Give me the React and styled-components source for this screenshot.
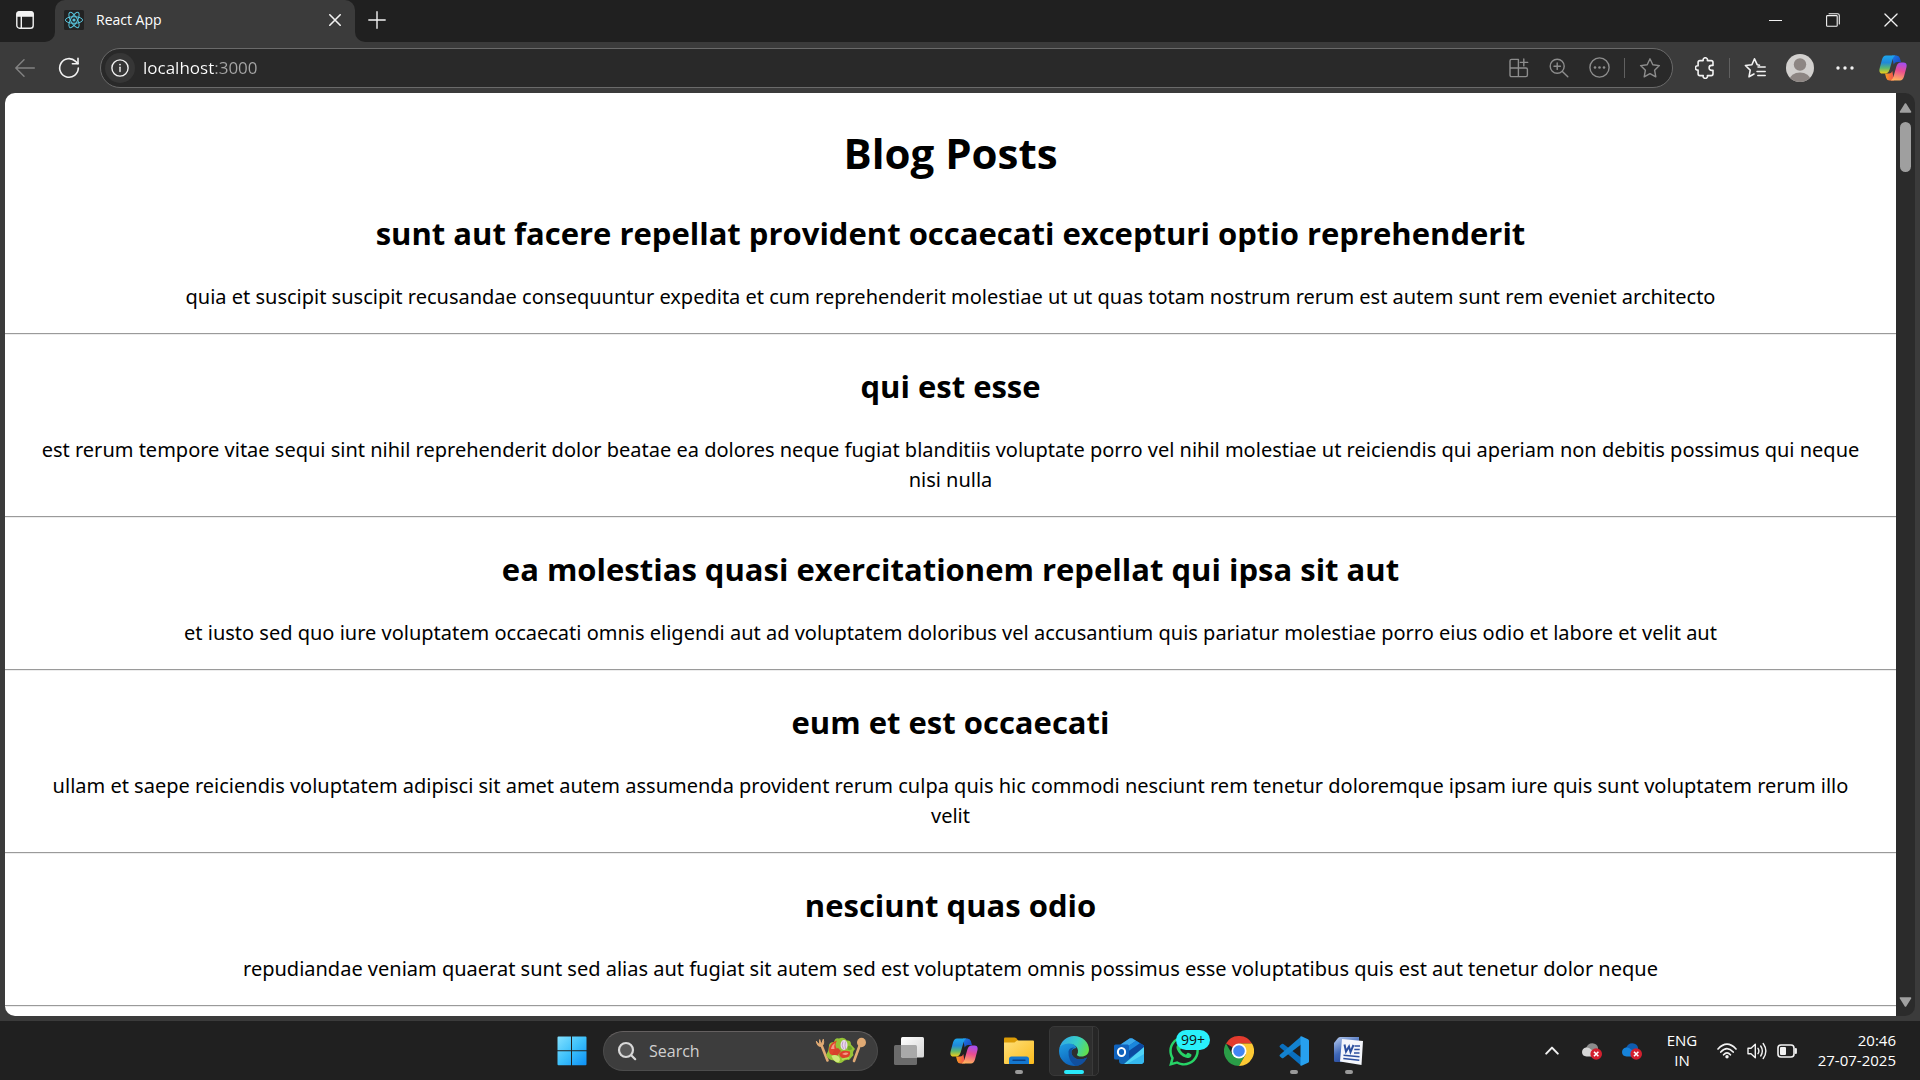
import React from "react";
import styled, { createGlobalStyle, css } from "styled-components";
import { FaWhatsapp } from "react-icons/fa";

const Global = createGlobalStyle`
  *, *::before, *::after { box-sizing: border-box; }
  html, body { margin: 0; height: 100%; }
  body { background: #202020; overflow: hidden; font-family: "Open Sans", "Noto Sans", sans-serif; }
  button, input { font-family: inherit; }
`;

const Desktop = styled.div`
  display: flex;
  flex-direction: column;
  height: 100vh;
`;

const Browser = styled.div`
  display: flex;
  flex-direction: column;
  flex: 1;
  min-height: 0;
  background: #3b3b3b;
`;

const TitleBar = styled.header`
  display: flex;
  height: 42px;
`;

const TitleStart = styled.div`
  display: flex;
  width: 55px;
  padding-left: 5px;
  background: #202020;
  border-bottom-right-radius: 10px;
`;

const TitleEnd = styled.div`
  display: flex;
  flex: 1;
  justify-content: space-between;
  background: #202020;
  border-bottom-left-radius: 10px;
`;

const WindowControls = styled.div`
  display: flex;
`;

const IconButton = styled.button`
  display: flex;
  align-items: center;
  justify-content: center;
  flex: none;
  width: ${(p) => p.$w || 44}px;
  height: 40px;
  padding: 0;
  border: 0;
  background: none;
  color: ${(p) => p.$color || "#f2f2f2"};
  svg { display: block; }
`;

const TabHolder = styled.div`
  width: 300px;
  background: #202020;
`;

const Tab = styled.div`
  display: flex;
  align-items: center;
  height: 42px;
  padding: 0 0 2px 9px;
  border-radius: 10px 10px 0 0;
  background: #3b3b3b;
`;

const TabTitle = styled.span`
  flex: 1;
  margin-left: 12px;
  color: #fff;
  font-size: 14px;
  line-height: 20px;
`;

const Toolbar = styled.div`
  display: flex;
  align-items: center;
  height: 51px;
  padding: 0 1px 0 3px;
`;

const AddressBar = styled.div`
  display: flex;
  align-items: center;
  flex: 1;
  height: 40px;
  margin: 0 10px 0 9px;
  padding: 0 2px 0 4px;
  border: 1px solid #6a6a6a;
  border-radius: 20px;
  background: #292929;
`;

const SiteInfo = styled(IconButton)`
  width: 30px;
  height: 30px;
  border-radius: 15px;
  background: #363636;
`;

const AddressInput = styled.input`
  flex: 1;
  min-width: 0;
  height: 30px;
  margin-left: 8px;
  padding: 0;
  border: 0;
  outline: 0;
  font-size: 17px;
  color: transparent;
  background: linear-gradient(to right, #fff 72px, #a6a6a6 72px);
  background-clip: text;
  -webkit-background-clip: text;
`;

const Divider = styled.span`
  width: 1px;
  height: 20px;
  margin: 0 ${(p) => p.$gap}px;
  background: #606060;
`;

const Viewport = styled.div`
  display: flex;
  flex: 1;
  min-height: 0;
  margin: 0 5px 5px;
  border-radius: 10px;
  overflow: hidden;
`;

const Page = styled.main`
  flex: 1;
  overflow: hidden;
  background: #fff;
  color: #000;
  text-align: center;
`;

const PageTitle = styled.h1`
  margin: 30px 0;
  font-size: 42px;
  line-height: 59px;
  font-weight: 700;
`;

const Post = styled.article`
  border-bottom: 1px solid #9a9a9a;
  box-shadow: 0 1px #ededed;
  padding-bottom: 21px;
  margin-bottom: 31px;
`;

const PostTitle = styled.h2`
  margin: 0 0 27px;
  font-size: 31px;
  line-height: 43px;
  font-weight: 700;
`;

const PostBody = styled.p`
  margin: 0;
  padding: 0 32px;
  font-family: "Noto Sans", "Open Sans", sans-serif;
  font-size: 20px;
  line-height: 30px;
`;

const ScrollTrack = styled.div`
  display: flex;
  flex-direction: column;
  align-items: center;
  width: 19px;
  padding: 10px 0 9px;
  background: #2b2b2b;
`;

const ScrollArrow = styled.button`
  width: 13px;
  height: 10px;
  padding: 0;
  border: 0;
  background: none;
  svg { display: block; }
`;

const ScrollThumb = styled.div`
  width: 11px;
  height: 50px;
  margin: 9px 0 auto;
  border-radius: 6px;
  background: #9f9f9f;
`;

const Taskbar = styled.footer`
  display: grid;
  grid-template-columns: 1fr auto 1fr;
  align-items: center;
  height: 59px;
  background: #202020;
`;

const Pinned = styled.nav`
  display: flex;
  grid-column: 2;
  height: 58px;
`;

const TaskButton = styled.button`
  position: relative;
  display: flex;
  align-items: center;
  justify-content: center;
  width: 55px;
  height: 58px;
  padding: 0;
  border: 0;
  background: none;
  svg { display: block; }
  &::after {
    content: "";
    position: absolute;
    left: 50%;
    bottom: 6px;
    height: 4px;
    border-radius: 2px;
    transform: translateX(-50%);
    ${(p) => p.$state === "open" && css`width: 8px; background: #9a9a9a;`}
    ${(p) => p.$state === "active" && css`width: 20px; background: #29e8fa;`}
  }
`;

const ActiveStack = styled.span`
  display: flex;
  align-items: center;
  width: 50px;
  height: 50px;
  padding-left: 9px;
  border: 1px solid #383838;
  border-radius: 5px;
  background: linear-gradient(to right, #2e2e2e 42px, #3a3a3a 42px, #3a3a3a 43px, #262626 43px);
`;

const Badge = styled.span`
  position: absolute;
  top: 8px;
  left: 20px;
  width: 34px;
  height: 20px;
  border-radius: 10px;
  background: #29f0fb;
  color: #111;
  font-size: 14px;
  line-height: 20px;
`;

const SearchBox = styled.label`
  display: flex;
  align-items: center;
  align-self: center;
  width: 275px;
  height: 40px;
  margin: 0 3px 0 4px;
  padding: 0 10px 0 13px;
  border: 1px solid #4c4c4c;
  border-top-color: #646060;
  border-radius: 20px;
  background: #3d3d3d;
`;

const SearchInput = styled.input`
  flex: 1;
  min-width: 0;
  margin-left: 12px;
  padding: 0;
  border: 0;
  outline: 0;
  background: none;
  font-size: 16px;
  color: #fff;
  &::placeholder { color: #d0d0d0; opacity: 1; }
`;

const Tray = styled.div`
  display: flex;
  align-items: center;
  justify-content: flex-end;
  padding-right: 24px;
  color: #fff;
`;

const TrayText = styled.button`
  width: ${(p) => p.$w}px;
  padding: 0 0 2px;
  border: 0;
  background: none;
  color: #fff;
  font-size: 15px;
  line-height: 20px;
  text-align: ${(p) => p.$align || "center"};
  white-space: nowrap;
  span { display: block; }
`;

const stroke = { fill: "none", stroke: "currentColor", strokeWidth: 1.4, strokeLinecap: "round", strokeLinejoin: "round" };

const TabActionsIcon = () => (
  <svg width="18" height="18" viewBox="0 0 18 18" {...stroke}>
    <rect x="0.8" y="0.8" width="16.4" height="16.4" rx="2.8" />
    <path d="M1 2.5Q1 1 2.8 1h12.4Q17 1 17 2.5V5H1z" fill="currentColor" />
    <path d="M5.3 5v12" />
  </svg>
);

const ReactIcon = () => (
  <svg width="20" height="20" viewBox="0 0 20 20">
    <rect width="20" height="20" rx="1.5" fill="#222" />
    <g fill="none" stroke="#58c4dc" strokeWidth="1">
      <ellipse cx="10" cy="10" rx="8.6" ry="3.3" />
      <ellipse cx="10" cy="10" rx="8.6" ry="3.3" transform="rotate(60 10 10)" />
      <ellipse cx="10" cy="10" rx="8.6" ry="3.3" transform="rotate(120 10 10)" />
    </g>
    <circle cx="10" cy="10" r="1.6" fill="#58c4dc" />
  </svg>
);

const CrossIcon = ({ size = 11, w = 1.6 }) => (
  <svg width={size} height={size} viewBox="0 0 12 12" {...stroke} strokeWidth={w}>
    <path d="M0.8 0.8l10.4 10.4M11.2 0.8L0.8 11.2" />
  </svg>
);

const PlusIcon = () => (
  <svg width="18" height="18" viewBox="0 0 18 18" {...stroke}>
    <path d="M9 0.8v16.4M0.8 9h16.4" />
  </svg>
);

const MinimizeIcon = () => (
  <svg width="13" height="13" viewBox="0 0 13 13" fill="currentColor"><path d="M0 6h13v1H0z" /></svg>
);

const RestoreIcon = () => (
  <svg width="14" height="14" viewBox="0 0 14 14" {...stroke} strokeWidth="1.1">
    <rect x="0.6" y="2.6" width="10.6" height="10.6" rx="0.8" />
    <path d="M3 0.8h8.6q1.7 0 1.7 1.7V11" />
  </svg>
);

const BackIcon = () => (
  <svg width="20" height="18" viewBox="0 0 20 18" {...stroke}>
    <path d="M19.3 9H1M9 0.8L0.8 9L9 17.2" />
  </svg>
);

const RefreshIcon = () => (
  <svg width="22" height="22" viewBox="0 0 22 22" {...stroke} strokeWidth="1.6">
    <path d="M20.3 11A9.3 9.3 0 1 1 17.6 4.4L20 6.6" />
    <path d="M20 1.2v5.6h-5.6" />
  </svg>
);

const InfoIcon = () => (
  <svg width="18" height="18" viewBox="0 0 18 18" {...stroke}>
    <circle cx="9" cy="9" r="8.1" />
    <path d="M9 8.2v4.4" />
    <circle cx="9" cy="5.6" r="0.9" fill="currentColor" stroke="none" />
  </svg>
);

const AppsIcon = () => (
  <svg width="20" height="20" viewBox="0 0 20 20" {...stroke}>
    <path d="M1 10V3q0-1.6 1.6-1.6H9.4V18.6M1 10h16q1.4 0 1.4 1.4v5.6q0 1.6-1.6 1.6H2.6Q1 18.6 1 17z" />
    <path d="M14.8 0.9v7M11.3 4.4h7.4" />
  </svg>
);

const ZoomIcon = () => (
  <svg width="20" height="20" viewBox="0 0 20 20" {...stroke}>
    <circle cx="8.2" cy="8.2" r="7" />
    <path d="M13.4 13.4l5.4 5.4M8.2 5v6.4M5 8.2h6.4" />
  </svg>
);

const MoreCircleIcon = () => (
  <svg width="21" height="21" viewBox="0 0 21 21" {...stroke}>
    <circle cx="10.5" cy="10.5" r="9.6" />
    <g fill="currentColor" stroke="none">
      <circle cx="6" cy="10.5" r="1.3" /><circle cx="10.5" cy="10.5" r="1.3" /><circle cx="15" cy="10.5" r="1.3" />
    </g>
  </svg>
);

const StarIcon = () => (
  <svg width="22" height="22" viewBox="0 0 22 22" {...stroke}>
    <path d="M11 1.8l2.8 5.9 6.6.9-4.8 4.6 1.2 6.6L11 16.6l-5.8 3.2 1.2-6.6L1.6 8.6l6.6-.9z" />
  </svg>
);

const PuzzleIcon = () => (
  <svg width="20" height="22" viewBox="0 0 20 22" {...stroke} strokeWidth="1.6">
    <path d="M4.900 3.600H8.200a2.200 2.200 0 1 1 4.200 0H16.200a1.800 1.800 0 0 1 1.800 1.800V8.400H16.600a2.500 2.500 0 1 0 0 5H18v3.400a1.800 1.800 0 0 1-1.800 1.800H12.400a2.200 2.200 0 1 1-4.200 0H4.900a1.800 1.800 0 0 1-1.800-1.800V13.100a2.200 2.200 0 1 1 0-4.300V5.400a1.800 1.800 0 0 1 1.800-1.800z" />
  </svg>
);

const FavoritesIcon = () => (
  <svg width="22" height="22" viewBox="0 0 22 22" {...stroke} strokeWidth="1.6">
    <path d="M15.500 8.200L13.200 7.700 10.500 1.800 7.900 7.700 1.400 8.500l4.800 4.600-1.200 6.700 5-2.800" />
    <path d="M14 10H21.200M13 14.400h8.200M13.800 18.600H21.200" strokeWidth="1.500" />
  </svg>
);

const AvatarIcon = () => (
  <svg width="28" height="28" viewBox="0 0 28 28">
    <clipPath id="avatarClip"><circle cx="14" cy="14" r="14" /></clipPath>
    <g clipPath="url(#avatarClip)">
      <rect width="28" height="28" fill="#d2d0ce" />
      <circle cx="14" cy="10.500" r="6.200" fill="#8d8683" />
      <ellipse cx="14" cy="26" rx="10.500" ry="7.500" fill="#8d8683" />
    </g>
  </svg>
);

const DotsIcon = () => (
  <svg width="18" height="4" viewBox="0 0 18 4" fill="currentColor">
    <circle cx="2" cy="2" r="1.700" /><circle cx="9" cy="2" r="1.700" /><circle cx="16" cy="2" r="1.700" />
  </svg>
);

const CopilotIcon = ({ id }) => (
  <svg width="28" height="26" viewBox="0 0 28 26">
    <defs>
      <linearGradient id={id + "a"} x1="0" y1="0" x2="0" y2="1">
        <stop offset="0" stopColor="#1da7ee" /><stop offset=".4" stopColor="#2189d8" />
        <stop offset=".7" stopColor="#5cb870" /><stop offset="1" stopColor="#f2cf16" />
      </linearGradient>
      <linearGradient id={id + "b"} x1=".6" y1="0" x2=".4" y2="1">
        <stop offset="0" stopColor="#a44df0" /><stop offset=".45" stopColor="#ea4d90" /><stop offset="1" stopColor="#ffb35c" />
      </linearGradient>
      <linearGradient id={id + "c"} x1="0" y1="0" x2="1" y2="1">
        <stop offset="0" stopColor="#1a7be8" /><stop offset="1" stopColor="#1d3fb8" />
      </linearGradient>
      <linearGradient id={id + "d"} x1="0" y1="0" x2="1" y2="0">
        <stop offset="0" stopColor="#f9a01e" /><stop offset="1" stopColor="#f04b52" />
      </linearGradient>
    </defs>
    <path d="M13 .5h4.500q2.500 0 3.300 2.500L22 7h-4q-2.500 0-3.300 2.600z" fill={`url(#${id}c)`} />
    <path d="M15 25.500h-4.500q-2.500 0-3.300-2.500L6 18.500h4q2.500 0 3.300-2.600z" fill={`url(#${id}d)`} />
    <path d="M7 .5h9.500q-2 .5-3 4L10.600 14.500Q9.500 18.500 6 18.500H3.500Q-.5 18.500.6 13.500L3 4.500Q4.200 .5 7 .5z" fill={`url(#${id}a)`} />
    <path d="M21 25.500h-9.500q2-.5 3-4L17.400 11.500Q18.500 7.500 22 7.500h2.500Q28.500 7.500 27.400 12.500L25 21.500Q23.800 25.500 21 25.500z" fill={`url(#${id}b)`} />
  </svg>
);

const Triangle = ({ down }) => (
  <svg width="13" height="10" viewBox="0 0 13 10">
    <path d={down ? "M1.500 1h10L6.500 9z" : "M1.500 9h10L6.500 1z"} fill="#a0a0a0" stroke="#a0a0a0" strokeWidth="1.600" strokeLinejoin="round" />
  </svg>
);

const StartIcon = () => (
  <svg width="30" height="30" viewBox="0 0 30 30">
    <defs>
      <linearGradient id="start" gradientUnits="userSpaceOnUse" x1="0" y1="0" x2="30" y2="30">
        <stop offset="0" stopColor="#86e2ff" /><stop offset=".5" stopColor="#3cc0fb" /><stop offset="1" stopColor="#0a8df5" />
      </linearGradient>
    </defs>
    <path d="M1.500 .500H14v13.800H.500V1.500Q.500.500 1.500.500zM15 .500h13.500q1 0 1 1v12.800H15zM.500 15.300H14v14H1.500q-1 0-1-1zM15 15.300h14.500v13q0 1-1 1H15z" fill="url(#start)" />
  </svg>
);

const SearchIcon = () => (
  <svg width="20" height="20" viewBox="0 0 20 20" fill="#575757" stroke="#d8d8d8" strokeWidth="2.200" strokeLinecap="round">
    <circle cx="9" cy="9" r="7" /><path d="M14.200 14.200l4 4" />
  </svg>
);

const SaladIcon = () => (
  <svg width="52" height="27" viewBox="0 0 52 27">
    <g stroke="#e0aa74" strokeLinecap="round" fill="#e0aa74">
      <path d="M6.800 9L12.500 23.500" strokeWidth="2.600" />
      <path d="M1.400 4.500Q2.200 10 6 9.300 9.800 8 8.300 2.200L7 6 5.800 6.400 4.700 2.600 4.400 6.500 3.600 6.800z" strokeWidth="1" />
      <path d="M44.500 9L39 24" strokeWidth="2.600" />
      <ellipse cx="46.500" cy="5.500" rx="4.500" ry="4.700" stroke="none" />
    </g>
    <path d="M14 9Q14 5 19 5Q20 0 24 1.500Q29-.800 32 3.500Q36 3 36 7.500L40 12Q37 15 38.500 18Q36 21 34 23Q30 22 27 25.500Q22 27.500 19 23.500Q13 23 11 18Q14 14 14 9z" fill="#96c437" />
    <path d="M14 13Q14 6 22 3.500Q19 8 22 12Q18 14 18 18Q14 18 14 13z" fill="#e0452e" />
    <path d="M16 12Q16.500 8 20 6.200Q18.500 9.500 19.500 12z" fill="#f59c86" />
    <path d="M24 17Q27 12 35 14.500Q36 20 30 21.500Q25 21 24 17z" fill="#dd3f2c" />
    <path d="M27 17Q30 14.500 33.500 16Q32 19.500 27 17z" fill="#f59c86" />
    <path d="M19 13L23 11 26 14 22 19 17 18z" fill="#d7402c" />
    <ellipse cx="29" cy="8" rx="3.500" ry="5" fill="#eadcec" />
    <path d="M28 4.500Q26 8 28.500 12M30.500 4.500Q29.500 8 30.500 12" stroke="#b78bc0" strokeWidth=".8" fill="none" />
    <path d="M33 9Q36 8 37.500 12Q35 14 32.500 12.500z" fill="#6ea52c" />
    <path d="M16.500 19Q20 17 23.500 19.500Q26 22 24 25Q19 26 16.500 19z" fill="#cfe97c" />
    <path d="M27 22.500Q30 21 34 21" stroke="#bcdc55" strokeWidth="1.600" fill="none" />
  </svg>
);

const TaskViewIcon = () => (
  <svg width="30" height="28" viewBox="0 0 30 28">
    <defs>
      <linearGradient id="tvw" x1="0" y1="0" x2="1" y2="1"><stop offset="0" stopColor="#fff" /><stop offset="1" stopColor="#d5d5d5" /></linearGradient>
    </defs>
    <rect x="0" y="8" width="23" height="20" rx="1.500" fill="#6b6b6b" />
    <rect x="7" y="0" width="23" height="20.500" rx="1.500" fill="url(#tvw)" />
    <path d="M7 8h14.500q1.500 0 1.500 1.500v11H8.500Q7 20.500 7 19z" fill="#a9a9a9" />
  </svg>
);

const FolderIcon = () => (
  <svg width="30" height="28" viewBox="0 0 30 28">
    <defs><linearGradient id="fold" x1="0" y1="0" x2="1" y2="1"><stop offset="0" stopColor="#ffe07a" /><stop offset="1" stopColor="#fbbb1c" /></linearGradient></defs>
    <path d="M0 1.500Q0 .500 1 .500h9.500q1 0 1.700.700l2 2.300V8H0z" fill="#dc9c06" />
    <path d="M0 5.500h10.500L13 3.500h16q1 0 1 1v21.500q0 1-1 1H1q-1 0-1-1z" fill="url(#fold)" />
    <path d="M5 27v-5q0-2.500 2.500-2.500h15q2.500 0 2.500 2.500v5z" fill="#1477cf" />
    <path d="M9 23.300h12" stroke="#0a3f83" strokeWidth="1.400" strokeLinecap="round" />
  </svg>
);

const EdgeIcon = () => (
  <svg width="30" height="30" viewBox="0 0 30 30">
    <defs>
      <linearGradient id="eg1" x1="0" y1=".3" x2="1" y2=".6"><stop offset="0" stopColor="#31a8e8" /><stop offset=".55" stopColor="#38cfc4" /><stop offset="1" stopColor="#62e04a" /></linearGradient>
      <linearGradient id="eg2" x1="0" y1="0" x2=".5" y2="1"><stop offset="0" stopColor="#1fa0e4" /><stop offset="1" stopColor="#0d5fb8" /></linearGradient>
    </defs>
    <path d="M0 15Q0 8 7 6.500Q15 6 17.500 12Q14 12 12.700 14.500C11 18 15 23.500 20.500 23.500Q25 23.500 28 21.500Q24 30 15 30A15 15 0 0 1 0 15z" fill="url(#eg2)" />
    <path d="M9.500 15.500Q10 11.500 15.500 11.500Q12.500 13 12.500 16C12.500 20 16 23.500 21 23.300Q25 23 28 21.500Q24.500 29.500 16.500 30Q9 25 9.500 15.500z" fill="#114f9e" />
    <path d="M.5 12A15 15 0 0 1 15 0C24 0 30 6.500 30 13.500C30 18 26.500 20.500 22.500 20.500Q18 20.500 18 18.500Q19.200 17 19 14.500C18.500 10 14 7.200 9.500 7.500C5 7.800 2 9 .5 12z" fill="url(#eg1)" />
  </svg>
);

const OutlookIcon = () => (
  <svg width="30" height="26" viewBox="0 0 30 26">
    <path d="M5 7.500L15.500.600Q17 0 18.500.600L30 7.500V23q0 3-3 3H8q-3 0-3-3z" fill="#1066b5" />
    <path d="M7 6.300L15.500.600Q17 0 18.500.600L22 2.800 10 11z" fill="#3ba7ea" />
    <path d="M22 2.800L26 5.200 13 14 8 12.500z" fill="#1a86dd" />
    <path d="M26 5.200L30 7.500V10L15 20V13z" fill="#0b49a0" />
    <path d="M30 9v13q0 4-4 4H10z" fill="#4fd3f6" />
    <path d="M30 16L13 26h13q4 0 4-4z" fill="#35b8ee" />
    <rect x="0" y="6.500" width="15" height="15" rx="1.500" fill="#0f62bd" />
    <ellipse cx="7.500" cy="14" rx="3.600" ry="4" fill="none" stroke="#fff" strokeWidth="2" />
  </svg>
);

const ChromeIcon = () => (
  <svg width="30" height="30" viewBox="0 0 30 30">
    <path d="M15 15L2 7.500A15 15 0 0 1 28 7.500H15z" fill="#e33b2e" />
    <path d="M2 7.500A15 15 0 0 0 15 30L21.500 18.700 15 22.500 8.500 18.700z" fill="#2a9d47" />
    <path d="M28 7.500A15 15 0 0 1 15 30L21.500 18.700Q23.500 12 15 7.500z" fill="#fcc934" />
    <circle cx="15" cy="15" r="7.500" fill="#fff" />
    <circle cx="15" cy="15" r="5.800" fill="#4285f4" />
  </svg>
);

const CodeIcon = () => (
  <svg width="30" height="30" viewBox="0 0 30 30">
    <path d="M1 9.500l1.800-1.500q.8-.5 1.600 0L22 21.500V29.500L.900 11.200Q0 10.300 1 9.500z" fill="#0a6fbe" />
    <path d="M1 20.500l1.800 1.500q.8.500 1.600 0L22 8.500V.500L.900 18.800Q0 19.700 1 20.500z" fill="#1382cf" />
    <path d="M21.500.400Q22.200 0 23 .400l6 2.800q1 .500 1 1.600v20.400q0 1.100-1 1.600l-6 2.800q-.8.400-1.500 0z" fill="#27a0ee" />
  </svg>
);

const WordIcon = () => (
  <svg width="29" height="28" viewBox="0 0 29 28">
    <defs><linearGradient id="wd" x1="0" y1="0" x2=".5" y2="1"><stop offset="0" stopColor="#b9cdf0" /><stop offset=".6" stopColor="#3f68b8" /><stop offset="1" stopColor="#27489a" /></linearGradient></defs>
    <path d="M4 1Q5 0 6.500 0H25v25H1.500Q0 25 0 23.500V6z" fill="url(#wd)" />
    <path d="M8 2l21 2-1.500 24L6 24.500z" fill="#f4f6fb" />
    <g fill="none" stroke="#2b4f9f">
      <path d="M10.500 7.500l1.500 7 3-5 1.500 5.500 3-7" strokeWidth="2" />
      <path d="M20.500 9h5.500M20.300 12.500h5.400M20 16h5.500M9.500 18.300l16 1.400M9.300 21.500l16 1.800" strokeWidth="1.500" />
    </g>
  </svg>
);

const ChevronUpIcon = () => (
  <svg width="14" height="9" viewBox="0 0 14 9" {...stroke} strokeWidth="2"><path d="M1.200 7.600L7 1.600l5.800 6" /></svg>
);

const CloudIcon = ({ back, front }) => (
  <svg width="20" height="18" viewBox="0 0 20 18">
    <path d="M4 6Q6 1 10.500 1.200Q15 1.500 16 5.500V12H5z" fill={back} />
    <path d="M4 5.500Q7 5 9 7.500L16 11.500Q15 14.500 12 14.500H4.500Q0 14 0 10Q.3 6 4 5.500z" fill={front} />
    <circle cx="14.200" cy="12" r="5.800" fill="#d3202e" />
    <path d="M12 9.800l4.400 4.400M16.400 9.800L12 14.200" stroke="#fff" strokeWidth="1.600" />
  </svg>
);

const WifiIcon = () => (
  <svg width="20" height="16" viewBox="0 0 20 16" {...stroke} strokeWidth="1.700">
    <path d="M1 6Q10-3.600 19 6M3.800 9Q10 2.200 16.200 9M6.600 11.800Q10 8 13.400 11.800" />
    <circle cx="10" cy="13.700" r="1.700" fill="currentColor" stroke="none" />
  </svg>
);

const SpeakerIcon = () => (
  <svg width="20" height="18" viewBox="0 0 20 18" {...stroke}>
    <path d="M1 6.300h3L8.300 2.300V15.700L4 11.700H1z" />
    <path d="M11 6.300Q12.800 9 11 11.700M13.700 4Q17 9 13.700 14M16.200 1.500Q21.500 9 16.200 16.500" />
  </svg>
);

const BatteryIcon = () => (
  <svg width="21" height="14" viewBox="0 0 21 14" {...stroke} strokeWidth="1.600">
    <rect x="1" y="1" width="16" height="12" rx="3" />
    <rect x="3" y="3" width="6" height="8" rx="1" fill="currentColor" stroke="none" />
    <path d="M18.800 5v4" strokeWidth="2.200" />
  </svg>
);

const posts = [
  {
    title: "sunt aut facere repellat provident occaecati excepturi optio reprehenderit",
    body: "quia et suscipit suscipit recusandae consequuntur expedita et cum reprehenderit molestiae ut ut quas totam nostrum rerum est autem sunt rem eveniet architecto",
  },
  {
    title: "qui est esse",
    body: "est rerum tempore vitae sequi sint nihil reprehenderit dolor beatae ea dolores neque fugiat blanditiis voluptate porro vel nihil molestiae ut reiciendis qui aperiam non debitis possimus qui neque nisi nulla",
  },
  {
    title: "ea molestias quasi exercitationem repellat qui ipsa sit aut",
    body: "et iusto sed quo iure voluptatem occaecati omnis eligendi aut ad voluptatem doloribus vel accusantium quis pariatur molestiae porro eius odio et labore et velit aut",
  },
  {
    title: "eum et est occaecati",
    body: "ullam et saepe reiciendis voluptatem adipisci sit amet autem assumenda provident rerum culpa quis hic commodi nesciunt rem tenetur doloremque ipsam iure quis sunt voluptatem rerum illo velit",
  },
  {
    title: "nesciunt quas odio",
    body: "repudiandae veniam quaerat sunt sed alias aut fugiat sit autem sed est voluptatem omnis possimus esse voluptatibus quis est aut tenetur dolor neque",
  },
];

export default function App() {
  return (
    <Desktop>
      <Global />
      <Browser>
        <TitleBar>
          <TitleStart>
            <IconButton $w={40} aria-label="Tab actions"><TabActionsIcon /></IconButton>
          </TitleStart>
          <TabHolder>
            <Tab>
              <ReactIcon />
              <TabTitle>React App</TabTitle>
              <IconButton $w={40} aria-label="Close tab"><CrossIcon size={12} /></IconButton>
            </Tab>
          </TabHolder>
          <TitleEnd>
            <IconButton aria-label="New tab"><PlusIcon /></IconButton>
            <WindowControls>
              <IconButton $w={58} aria-label="Minimize"><MinimizeIcon /></IconButton>
              <IconButton $w={58} aria-label="Restore"><RestoreIcon /></IconButton>
              <IconButton $w={58} aria-label="Close"><CrossIcon size={14} w={1.1} /></IconButton>
            </WindowControls>
          </TitleEnd>
        </TitleBar>
        <Toolbar>
          <IconButton $color="#838383" aria-label="Back"><BackIcon /></IconButton>
          <IconButton aria-label="Refresh"><RefreshIcon /></IconButton>
          <AddressBar>
            <SiteInfo aria-label="Site information"><InfoIcon /></SiteInfo>
            <AddressInput aria-label="Address" defaultValue="localhost:3000" spellCheck={false} />
            <IconButton $w={40} $color="#8d8d8d" aria-label="Install app"><AppsIcon /></IconButton>
            <IconButton $w={40} $color="#8d8d8d" aria-label="Zoom"><ZoomIcon /></IconButton>
            <IconButton $w={40} $color="#8d8d8d" aria-label="More page actions"><MoreCircleIcon /></IconButton>
            <Divider $gap={5} />
            <IconButton $w={40} $color="#8d8d8d" aria-label="Add to favorites"><StarIcon /></IconButton>
          </AddressBar>
          <IconButton aria-label="Extensions"><PuzzleIcon /></IconButton>
          <Divider $gap={2} />
          <IconButton $w={45} aria-label="Favorites"><FavoritesIcon /></IconButton>
          <IconButton $w={45} aria-label="Profile"><AvatarIcon /></IconButton>
          <IconButton $w={45} aria-label="Settings and more"><DotsIcon /></IconButton>
          <IconButton $w={52} aria-label="Copilot"><CopilotIcon id="cpTop" /></IconButton>
        </Toolbar>
        <Viewport>
          <Page>
            <PageTitle>Blog Posts</PageTitle>
            {posts.map((post) => (
              <Post key={post.title}>
                <PostTitle>{post.title}</PostTitle>
                <PostBody>{post.body}</PostBody>
              </Post>
            ))}
          </Page>
          <ScrollTrack>
            <ScrollArrow aria-label="Scroll up"><Triangle /></ScrollArrow>
            <ScrollThumb />
            <ScrollArrow aria-label="Scroll down"><Triangle down /></ScrollArrow>
          </ScrollTrack>
        </Viewport>
      </Browser>
      <Taskbar>
        <Pinned>
          <TaskButton aria-label="Start"><StartIcon /></TaskButton>
          <SearchBox>
            <SearchIcon />
            <SearchInput aria-label="Search" placeholder="Search" />
            <SaladIcon />
          </SearchBox>
          <TaskButton aria-label="Task view"><TaskViewIcon /></TaskButton>
          <TaskButton aria-label="Copilot"><CopilotIcon id="cpTask" /></TaskButton>
          <TaskButton $state="open" aria-label="File Explorer"><FolderIcon /></TaskButton>
          <TaskButton $state="active" aria-label="Edge"><ActiveStack><EdgeIcon /></ActiveStack></TaskButton>
          <TaskButton aria-label="Outlook"><OutlookIcon /></TaskButton>
          <TaskButton aria-label="WhatsApp">
            <FaWhatsapp size={34} color="#27d366" />
            <Badge>99+</Badge>
          </TaskButton>
          <TaskButton aria-label="Chrome"><ChromeIcon /></TaskButton>
          <TaskButton $state="open" aria-label="Visual Studio Code"><CodeIcon /></TaskButton>
          <TaskButton $state="open" aria-label="Word"><WordIcon /></TaskButton>
        </Pinned>
        <Tray>
          <IconButton $w={40} aria-label="Show hidden icons"><ChevronUpIcon /></IconButton>
          <IconButton $w={40} aria-label="OneDrive"><CloudIcon back="#8c8c8c" front="#d6d6d6" /></IconButton>
          <IconButton $w={40} aria-label="OneDrive work"><CloudIcon back="#0f5cb0" front="#1683da" /></IconButton>
          <TrayText $w={60} aria-label="Language"><span>ENG</span><span>IN</span></TrayText>
          <IconButton $w={30} aria-label="Network"><WifiIcon /></IconButton>
          <IconButton $w={30} aria-label="Volume"><SpeakerIcon /></IconButton>
          <IconButton $w={30} aria-label="Battery"><BatteryIcon /></IconButton>
          <TrayText $w={94} $align="right" aria-label="Clock"><span>20:46</span><span>27-07-2025</span></TrayText>
        </Tray>
      </Taskbar>
    </Desktop>
  );
}
